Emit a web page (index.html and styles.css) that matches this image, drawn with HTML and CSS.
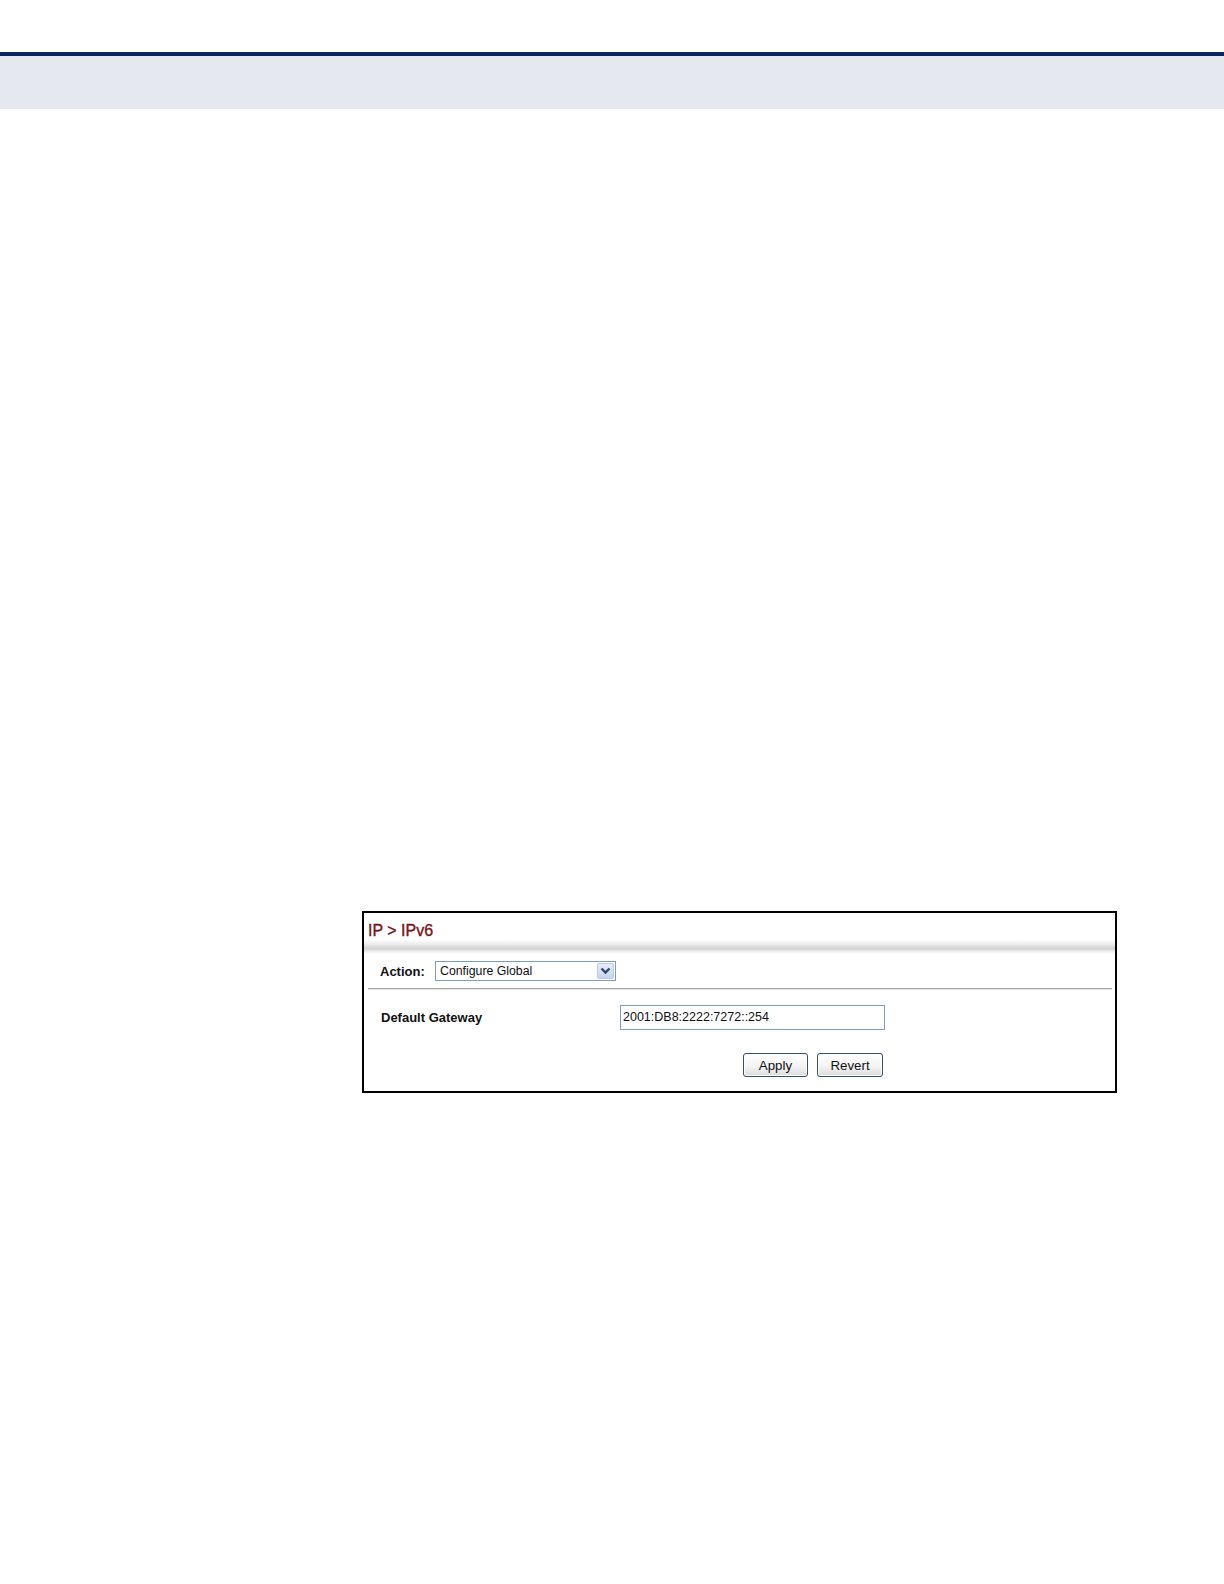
FILE: index.html
```html
<!DOCTYPE html>
<html>
<head>
<meta charset="utf-8">
<title>IP > IPv6</title>
<link rel="stylesheet" href="styles.css">
</head>
<body>
<div class="header">
  <div class="header-rule"></div>
  <div class="header-band"></div>
</div>
<div class="panel">
  <div class="panel-title">IP &gt; IPv6</div>
  <div class="panel-band"></div>
  <div class="action-row">
    <span class="label">Action:</span>
    <div class="select">
      <span class="select-text">Configure Global</span>
      <span class="select-btn">
        <svg width="11" height="8" viewBox="0 0 11 8"><path d="M1.5 1.5 L5.5 5.5 L9.5 1.5" fill="none" stroke="#33456b" stroke-width="2.4"/></svg>
      </span>
    </div>
  </div>
  <div class="separator"></div>
  <div class="field-row">
    <span class="label field-label">Default Gateway</span>
    <div class="input">2001:DB8:2222:7272::254</div>
  </div>
  <div class="button-row">
    <button class="btn btn-apply">Apply</button>
    <button class="btn btn-revert">Revert</button>
  </div>
</div>
</body>
</html>
```

FILE: styles.css
```css
html, body {
  margin: 0;
  padding: 0;
  background: #ffffff;
  font-family: "Liberation Sans", Arial, sans-serif;
}

.header {
  padding-top: 52px;
}

.header-rule {
  height: 4px;
  background: #0c2461;
}

.header-band {
  height: 53px;
  background: #e5e8ef;
}

.panel {
  margin-top: 802px;
  margin-left: 362px;
  width: 751px;
  border: 2px solid #000000;
  background: #ffffff;
}

.panel-title {
  height: 27px;
  box-sizing: border-box;
  padding: 9px 0 0 4px;
  font-size: 16px;
  line-height: 18px;
  color: #7a1215;
  -webkit-text-stroke: 0.35px #7a1215;
}

.panel-band {
  height: 14px;
  background: linear-gradient(to bottom, #fdfdfd 0%, #ececec 30%, #d2d2d2 62%, #f2f2f2 85%, #ffffff 100%);
}

.action-row {
  height: 34px;
  display: flex;
  align-items: center;
  padding-left: 16px;
}

.label {
  font-size: 13px;
  font-weight: bold;
  color: #111111;
}

.action-row .label {
  width: 55px;
}

.select {
  width: 181px;
  height: 20px;
  box-sizing: border-box;
  border: 1px solid #7f9db9;
  display: flex;
  align-items: center;
  justify-content: space-between;
  padding-left: 4px;
  padding-right: 1px;
}

.select-text {
  font-size: 12.3px;
  color: #111111;
}

.select-btn {
  width: 17px;
  height: 16px;
  box-sizing: border-box;
  border: 1px solid #bccbe8;
  border-radius: 2px;
  background: linear-gradient(to bottom, #e6eefc, #c4d4f2);
  display: flex;
  align-items: center;
  justify-content: center;
}

.separator {
  margin: 0 3px 0 4px;
  height: 1px;
  background: #a3a3a3;
  border-bottom: 1px solid #e6e6e6;
}

.field-row {
  display: flex;
  align-items: center;
  padding: 15px 0 0 17px;
}

.field-label {
  width: 239px;
}

.input {
  width: 265px;
  height: 25px;
  box-sizing: border-box;
  border: 1px solid #7f9db9;
  padding-left: 2px;
  font-size: 12.5px;
  line-height: 23px;
  color: #111111;
}

.button-row {
  display: flex;
  gap: 9px;
  padding: 23px 0 14px 379px;
}

.btn {
  height: 24px;
  box-sizing: border-box;
  border: 1px solid #34506f;
  border-radius: 3px;
  background: linear-gradient(to bottom, #ffffff 0%, #f4f4f4 55%, #dcdcdc 100%);
  font-family: "Liberation Sans", Arial, sans-serif;
  font-size: 13.3px;
  color: #111111;
  padding: 0;
  box-shadow: inset 0 0 0 1px #ffffff;
}

.btn-apply {
  width: 65px;
}

.btn-revert {
  width: 66px;
}
```
